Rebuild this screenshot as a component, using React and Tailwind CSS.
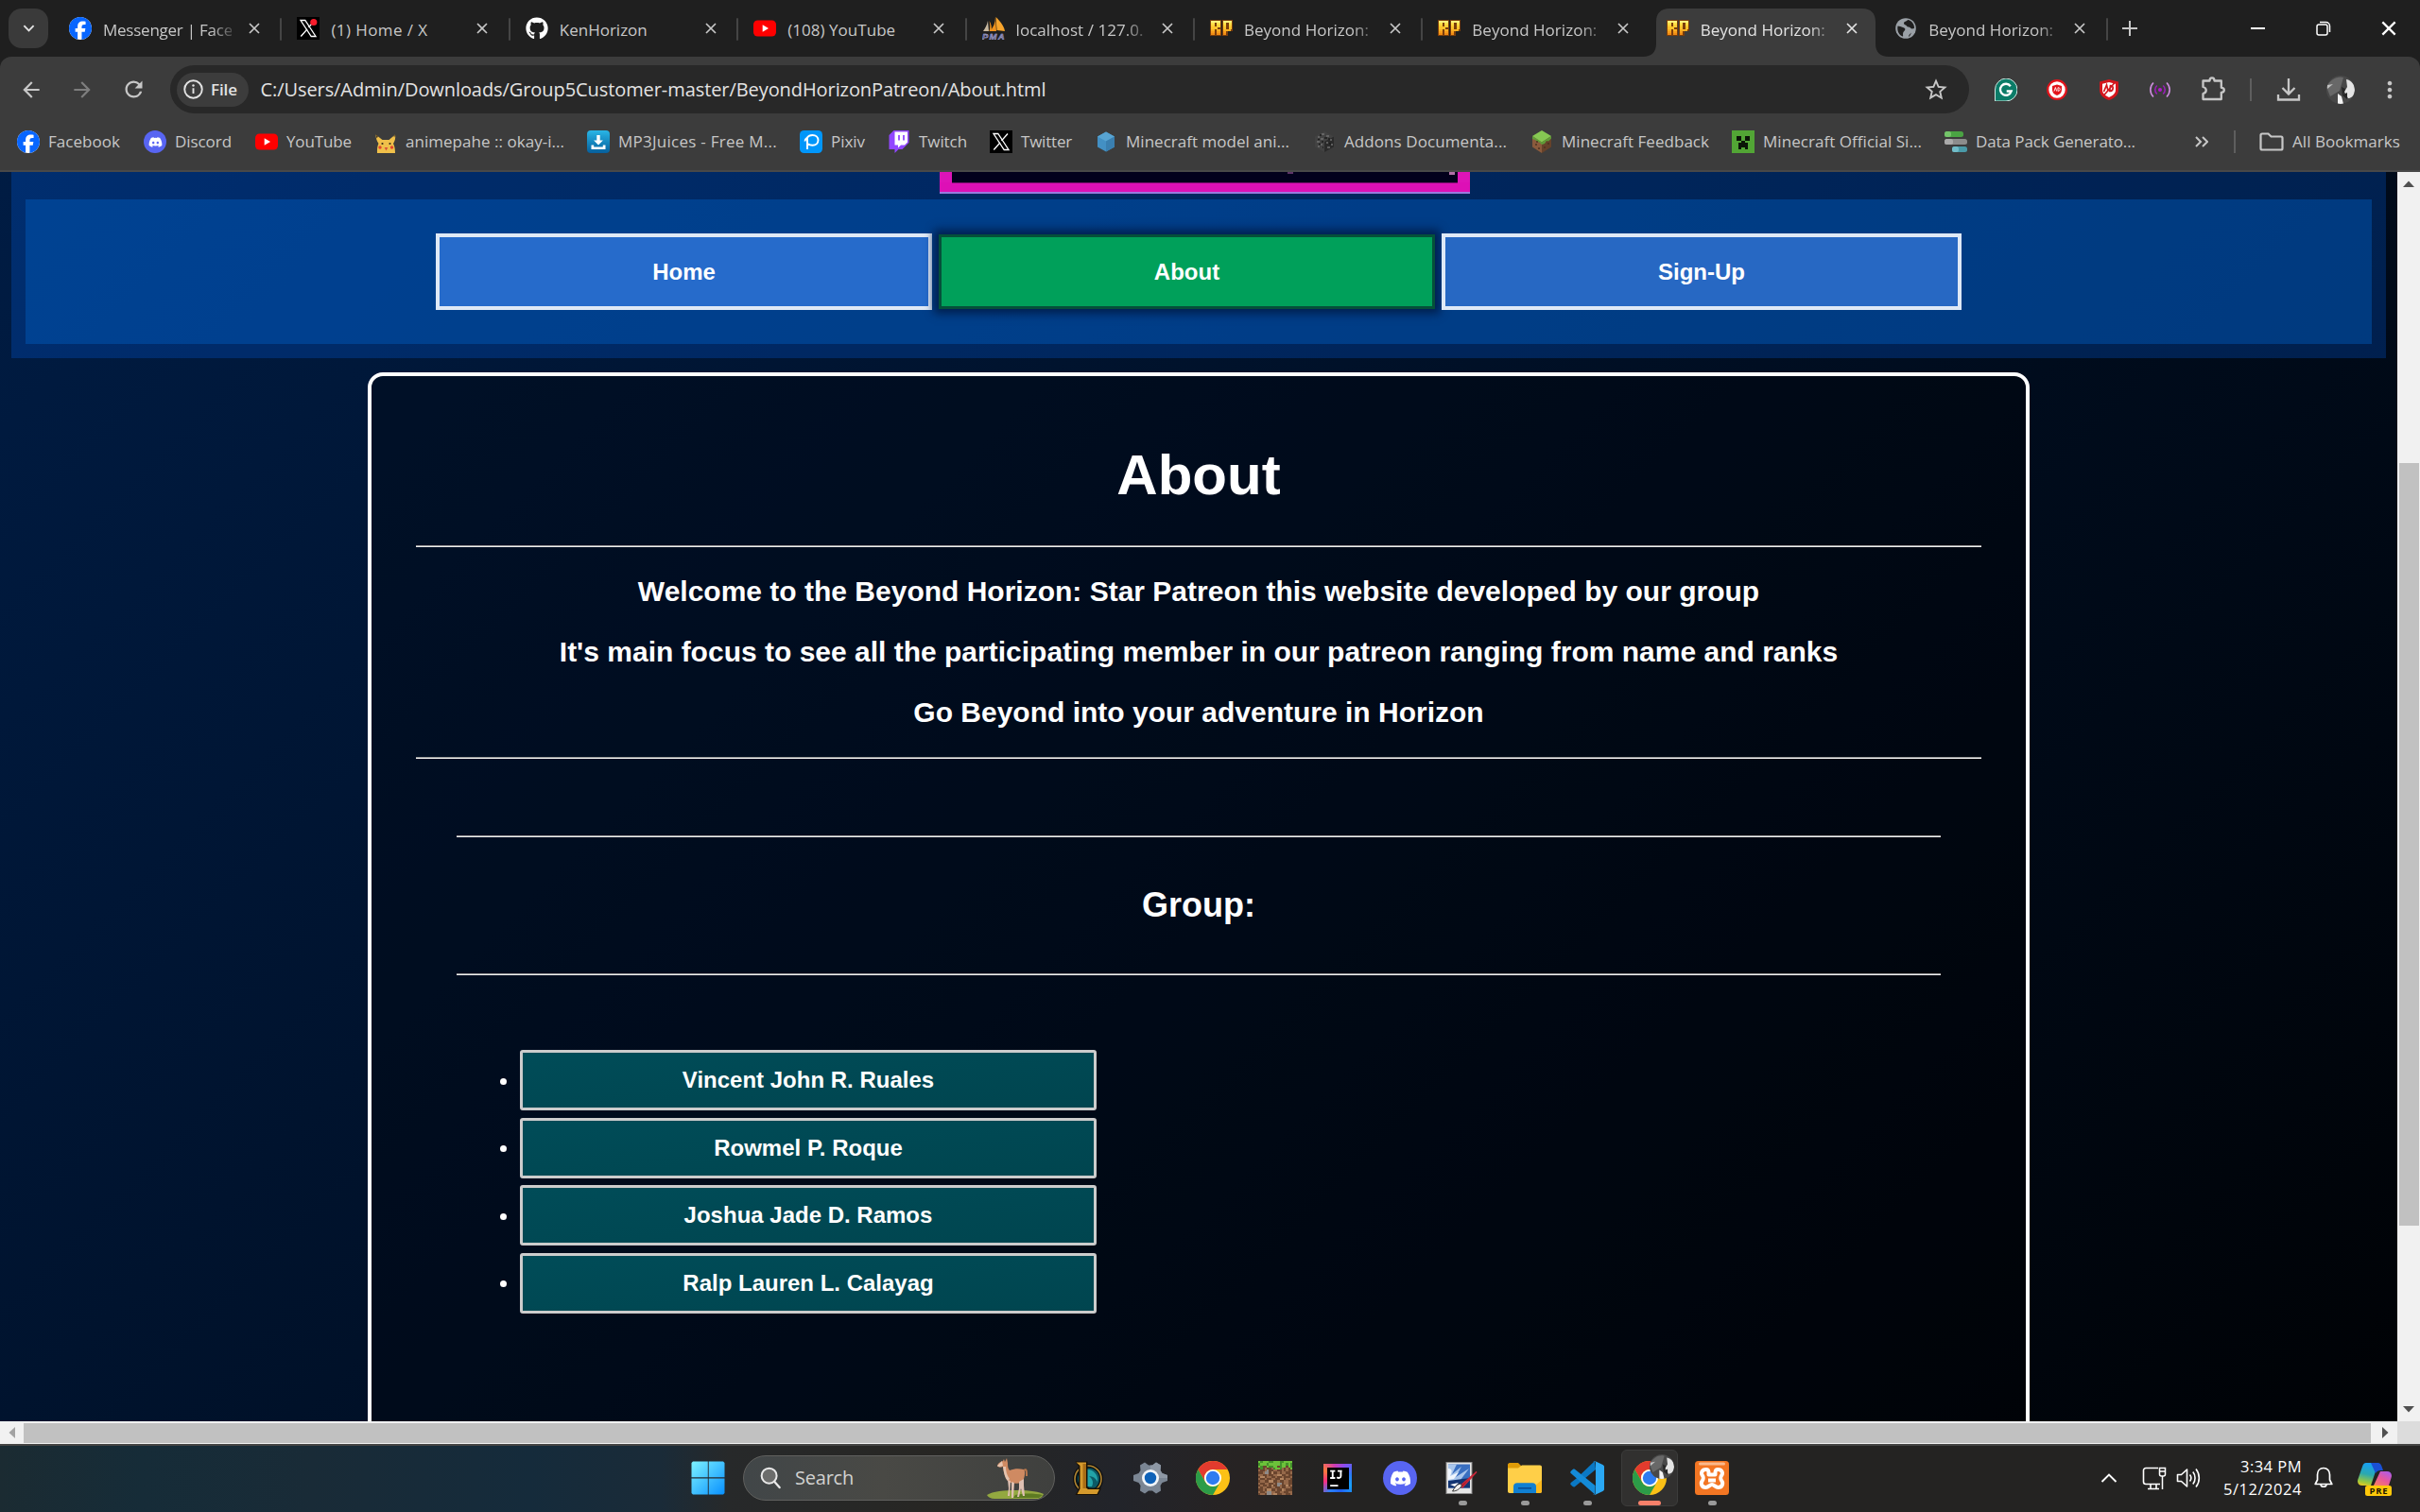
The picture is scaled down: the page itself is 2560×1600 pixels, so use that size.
import React, { useLayoutEffect, useRef, useState } from "react";
import { FaFacebook, FaGithub, FaDiscord } from "react-icons/fa6";
import {
  MdArrowBack,
  MdArrowForward,
  MdRefresh,
  MdStarBorder,
  MdMoreVert,
} from "react-icons/md";

/* Text whose tracking is adjusted so that it fills exactly `width` pixels. */
function Fit({ width, children, className = "" }) {
  const ref = useRef(null);
  const [spacing, setSpacing] = useState(0);
  useLayoutEffect(() => {
    const el = ref.current;
    el.style.letterSpacing = "0px";
    const natural = el.getBoundingClientRect().width;
    setSpacing((width - natural) / children.length);
  }, [width, children]);
  return (
    <span
      ref={ref}
      className={`inline-block shrink-0 whitespace-pre ${className}`}
      style={{ letterSpacing: `${spacing}px` }}
    >
      {children}
    </span>
  );
}

/* ---------- site icons ---------- */

const Facebook = () => (
  <span className="block size-6 rounded-full bg-white">
    <FaFacebook className="size-6 text-[#0866ff]" />
  </span>
);

const XLogo = ({ dot }) => (
  <svg viewBox="0 0 24 24" className="size-6">
    <rect width="24" height="24" fill="#000" />
    <path d="M4 3.500h4.800L20 20.500h-4.800z" fill="none" stroke="#fff" strokeWidth="1.300" />
    <path d="M19 3.500l-6.500 7.400M4.300 20.500l6.700-7.600" stroke="#fff" strokeWidth="1.400" />
    {dot && <circle cx="17.800" cy="5.500" r="3.600" fill="#f91c2b" />}
  </svg>
);

const Github = () => <FaGithub className="size-6 text-white" />;

const YouTube = () => (
  <svg viewBox="0 0 24 24" className="size-6">
    <rect x="0" y="3.500" width="24" height="17" rx="4.500" fill="#f00" />
    <path d="M9.700 8.300v7.400l6.300-3.700z" fill="#fff" />
  </svg>
);

const PhpMyAdmin = () => (
  <svg viewBox="0 0 24 24" className="size-6">
    <path d="M6 4c-1 5-3 8-5 11h6z" fill="#c9b9a0" />
    <path d="M14 0c0 6-2 11-6 15h7z" fill="#f0921c" />
    <path d="M14.500 0c4 4 8.500 9 9.500 15l-8.500-1z" fill="#f8a52c" />
    <path d="M7.500 4c1 4 1 8 0 11h2c1-4 0-8-2-11z" fill="#f0921c" />
    <text x="0" y="23.500" fontSize="9.500" fontWeight="700" fontStyle="italic" textLength="23.500" fontFamily="Liberation Sans, sans-serif" fill="#50508c" stroke="#c4c4e4" strokeWidth="0.400">PMA</text>
  </svg>
);

const RP_FILLS = ["#fff27a", "#ffe24a", "#ffd23a", "#ffc42c", "#fbb024", "#f79c1c", "#f08c14"];

const RPLogo = () => (
  <svg viewBox="0 0 24 24" className="size-6" shapeRendering="crispEdges">
    <rect x="0" y="3" width="11.500" height="17" fill="#7a3d0c" />
    <rect x="12.500" y="3" width="11.500" height="12" fill="#7a3d0c" />
    <rect x="12.500" y="14" width="6" height="6" fill="#7a3d0c" />
    {RP_FILLS.map((fill, y) => (
      <g key={y} fill={fill}>
        <rect x="1" y={4 + y * 2.15} width="3.500" height="2.200" />
        {y !== 3 && <rect x="7" y={4 + y * 2.15} width="3.500" height="2.200" />}
        {(y === 0 || y === 3) && <rect x="4" y={4 + y * 2.15} width="4" height="2.200" />}
        <rect x="13.500" y={4 + y * 2.15} width="3.500" height="2.200" />
        {y < 4 && <rect x="19.500" y={4 + y * 2.15} width="3.500" height="2.200" />}
        {(y === 0 || y === 4) && <rect x="16" y={4 + y * 2.15} width="6" height="2.200" />}
      </g>
    ))}
  </svg>
);

const Globe = () => (
  <svg viewBox="0 0 24 24" className="size-6">
    <circle cx="12" cy="12" r="10.800" fill="#9aa0a6" />
    <path d="M3.500 9.500c2 0 3.500 1 5.500 1.500s3 1.500 2 3-2 2-2 4 .5 2.500-.5 2.500C5 19 2.500 15 3.500 9.500zM14 3c-1 2-4 1.500-4 3.500s2.500 1.500 3 3 3 .5 4 2 3.500 1 4 0c.3-4-3-8-7-8.500zM15 21c0-2 1-2.500 3-4.500-1 2.500-1.500 3.500-3 4.500z" fill="#1f1f1f" />
  </svg>
);

const DiscordRound = ({ big }) => (
  <span className={big ? "flex size-9 items-center justify-center rounded-full bg-[#5865f2]" : "flex size-6 items-center justify-center rounded-full bg-[#5865f2]"}>
    <FaDiscord className={big ? "size-[23px] text-white" : "size-[15px] text-white"} />
  </span>
);

const Pikachu = () => (
  <svg viewBox="0 0 24 24" className="size-6">
    <path d="M1.500 4.500L8.500 10h7L22 4.500c.8 4-.5 7-2 9.500 1 2 2 4 2 10H3c0-5 0-7 1.500-10C2.500 11 1.500 8 1.500 4.500z" fill="#f0c04a" />
    <path d="M1.500 4.500l2.500 2-1.500 2zM22 4.500l-1.600 1.300.8 1.700z" fill="#4a3a20" />
    <circle cx="8.500" cy="14" r="1.100" fill="#3a2b18" />
    <circle cx="16.500" cy="14" r="1.100" fill="#3a2b18" />
    <circle cx="6" cy="18" r="1.700" fill="#e2452c" />
    <circle cx="18.500" cy="18" r="1.700" fill="#e2452c" />
    <path d="M10.700 18h3.600L12.500 21.500z" fill="#d8503a" />
  </svg>
);

const MP3 = () => (
  <span className="flex size-6 items-center justify-center rounded-[4px] bg-linear-to-b from-[#29b6e6] to-[#075f9c]">
    <svg viewBox="0 0 24 24" className="size-6">
      <path d="M10.300 5h3.400v5.500h3.200L12 15.600l-4.900-5.100h3.200z" fill="#fff" />
      <path d="M4.500 15.500h2.700v2h9.600v-2h2.700V20h-15z" fill="#fff" />
    </svg>
  </span>
);

const Pixiv = () => (
  <svg viewBox="0 0 24 24" className="size-6">
    <rect width="24" height="24" rx="4.500" fill="#0096fa" />
    <path d="M8 20V7.500C9 6 11 5 13.500 5c3.500 0 6 2.300 6 5.300 0 3.200-2.500 5.500-6 5.500-2 0-3.500-.5-4.500-1.600M8 7.500C6.500 8.500 5.500 10 5.500 11.500" fill="none" stroke="#fff" strokeWidth="1.900" />
  </svg>
);

const Twitch = () => (
  <svg viewBox="0 0 24 24" className="size-6">
    <path d="M6.500 0L1.500 5v15h6v4l4-4h4l7-7V0z" fill="#9146ff" />
    <path d="M7.500 1.500h13.500v11l-3 3h-4l-3 3v-3h-3.500z" fill="#fff" />
    <path d="M12 5v5.500M17 5v5.500" stroke="#9146ff" strokeWidth="1.800" />
  </svg>
);

const BlueBlock = () => (
  <svg viewBox="0 0 24 24" className="size-6">
    <path d="M12 1.500l9 5v11l-9 5-9-5v-11z" fill="#4390c4" />
    <path d="M12 1.500l9 5-9 5-9-5z" fill="#58a4d2" />
    <path d="M12 11.500l9-5v11l-9 5z" fill="#3a7fb0" />
  </svg>
);

const CoalBlock = () => (
  <svg viewBox="0 0 24 24" className="size-6">
    <path d="M12 1l10 5.500v11L12 23 2 17.500v-11z" fill="#424242" />
    <path d="M12 12l10-5.500v11L12 23z" fill="#2a2a2a" />
    <path d="M5 7h2M9 4h3M14 6h3M8 9h3M4 12h3M8 15h2M5 17h2M14 13h2M18 10h2M15 18h3M19 15h2" stroke="#707070" strokeWidth="1.300" />
    <path d="M7 5h2M12 8h3M5 9.500h2M9 12h2M6 14.500h2M10 18h1M16 9h2M17 14h2" stroke="#1c1c1c" strokeWidth="1.300" />
  </svg>
);

const GrassBlock = () => (
  <svg viewBox="0 0 24 24" className="size-6">
    <path d="M12 11l10-5v11.500L12 24z" fill="#66422a" />
    <path d="M12 11L2 6v11.500L12 24z" fill="#8a5a3c" />
    <path d="M12 0l10 6-10 6.500L2 6z" fill="#86c853" />
    <path d="M2 6l10 6.500L22 6v2.500l-3 3-2-.5-2 3-3 1-2.500-2.500L7 12l-2-2-3-1z" fill="#5f9c38" />
    <path d="M5 15h2M8 19h2M6 12h2M14 18h2M18 14h2" stroke="#4e3220" strokeWidth="1.400" />
  </svg>
);

const Creeper = () => (
  <svg viewBox="0 0 24 24" className="size-6" shapeRendering="crispEdges">
    <rect width="24" height="24" fill="#52a535" />
    <path d="M5 6h5v5H5zM14 6h5v5h-5zM10 11h4v2h3v7h-3v-2h-4v2H7v-7h3z" fill="#0b1407" />
  </svg>
);

const DataPack = () => (
  <svg viewBox="0 0 24 24" className="size-6">
    <rect x="0" y="1" width="20" height="6" rx="2.500" fill="#4aa343" />
    <rect x="0" y="1" width="7" height="6" rx="2.500" fill="#74c46a" />
    <rect x="0" y="9" width="24" height="6" rx="2.500" fill="#8c8c8c" />
    <rect x="0" y="9" width="9" height="6" rx="2.500" fill="#aaa" />
    <rect x="8" y="17" width="16" height="6" rx="2.500" fill="#4a9aa8" />
    <rect x="8" y="17" width="7" height="6" rx="2.500" fill="#72bcc8" />
  </svg>
);

/* ---------- browser chrome ---------- */

const TABS = [
  { icon: <Facebook />, title: "Messenger | Face", width: 137, fade: true, sep: true },
  { icon: <XLogo dot />, title: "(1) Home / X", width: 102, sep: true },
  { icon: <Github />, title: "KenHorizon", width: 93, sep: true },
  { icon: <YouTube />, title: "(108) YouTube", width: 114, sep: true },
  { icon: <PhpMyAdmin />, title: "localhost / 127.0.", width: 135, fade: true, sep: true },
  { icon: <RPLogo />, title: "Beyond Horizon:", width: 132, fade: true, sep: true },
  { icon: <RPLogo />, title: "Beyond Horizon:", width: 132, fade: true },
  { icon: <RPLogo />, title: "Beyond Horizon:", width: 132, fade: true, active: true },
  { icon: <Globe />, title: "Beyond Horizon:", width: 132, fade: true, sep: true },
];

const Cross = ({ className }) => (
  <svg viewBox="0 0 12 12" className={className}>
    <path d="M1 1l10 10M11 1L1 11" stroke="currentColor" strokeWidth="1.700" fill="none" />
  </svg>
);

function Tab({ icon, title, width, fade, sep, active }) {
  return (
    <div className="relative flex h-[60px] w-[241.400px] shrink-0 items-start pt-[9px]">
      {active && (
        <svg viewBox="0 0 262 51" className="absolute top-[9px] left-[-9px] h-[51px] w-[262px]">
          <path d="M0 51c9 0 14-5 14-14V14C14 5 19 0 28 0h204c9 0 14 5 14 14v23c0 9 5 14 14 14z" fill="#3c3c3c" />
        </svg>
      )}
      <div className="relative flex h-[42px] w-full items-center pl-[16px]">
        <span className="size-6 shrink-0">{icon}</span>
        <div
          className={
            "mt-[4px] ml-3 w-[136px] shrink-0 overflow-hidden text-[17px] leading-6 " +
            (active ? "text-[#e3e3e3] " : "text-[#c7c7c7] ") +
            (fade ? "[mask-image:linear-gradient(to_right,#000_84%,transparent_106%)]" : "")
          }
        >
          <Fit width={width}>{title}</Fit>
        </div>
        <Cross className={"ml-[18px] size-3 " + (active ? "text-[#e3e3e3]" : "text-[#c7c7c7]")} />
        {sep && <span className="mt-[2px] ml-auto h-6 w-[2px] rounded bg-[#454545]" />}
      </div>
    </div>
  );
}

function TabStrip() {
  return (
    <div className="flex h-[60px] w-full bg-[#1f1f1f]">
      <div className="mt-[9px] ml-[9px] flex size-[42px] shrink-0 items-center justify-center rounded-[14px] bg-[#3a3a3a]">
        <svg viewBox="0 0 14 8" className="h-2 w-[13px]">
          <path d="M1.500 1l5.500 5.500L12.500 1" fill="none" stroke="#e3e3e3" strokeWidth="2" />
        </svg>
      </div>
      <div className="ml-[6px] flex">
        {TABS.map((t, i) => (
          <Tab key={i} {...t} />
        ))}
      </div>
      <svg viewBox="0 0 16 16" className="mt-[22px] ml-[15px] size-4 shrink-0">
        <path d="M8 0v16M0 8h16" stroke="#c7c7c7" strokeWidth="2" />
      </svg>
      <div className="ml-auto flex items-center pr-[25px] text-white">
        <span className="mb-px h-[2px] w-[15px] bg-white" />
        <svg viewBox="0 0 16 16" className="ml-[54px] size-4">
          <rect x="1" y="4" width="11" height="11" rx="2" fill="none" stroke="#fff" strokeWidth="1.500" />
          <path d="M4 1.500h6.500a4 4 0 0 1 4 4V12" fill="none" stroke="#fff" strokeWidth="1.500" />
        </svg>
        <Cross className="ml-[53px] size-4" />
      </div>
    </div>
  );
}

const AvatarArt = ({ className }) => (
  <svg viewBox="0 0 30 30" className={className}>
    <defs>
      <clipPath id="avatar-clip"><circle cx="15" cy="15" r="15" /></clipPath>
    </defs>
    <g clipPath="url(#avatar-clip)">
      <rect width="30" height="30" fill="#484848" />
      <path d="M0 12C4 4 12 0 18 2l-4 14L4 22z" fill="#686868" />
      <path d="M1 10l6-1-6 5z" fill="#c0c0c0" />
      <path d="M21 4c6 1 9 6 9 12-1 6-4 8-7 8l-4-7 3-5z" fill="#e4e4e4" />
      <path d="M12 19l4 3 2 8h-6z" fill="#f4f4f4" />
      <path d="M16 12l4 2-2 6 4-2v7l-5-4z" fill="#262626" />
    </g>
  </svg>
);

function Toolbar() {
  return (
    <div className="flex h-[69px] w-full items-center rounded-t-xl bg-[#3c3c3c] text-[#c7c7c7]">
      <MdArrowBack className="ml-[20px] size-[26px] shrink-0" />
      <MdArrowForward className="ml-[28px] size-[26px] shrink-0 text-[#7e7e7e]" />
      <MdRefresh className="ml-[28px] size-[27px] shrink-0" />
      <div className="ml-[25px] flex h-[51px] w-[1903px] shrink-0 items-center rounded-full bg-[#282828]">
        <div className="ml-[7px] flex h-9 w-[76px] items-center rounded-full bg-[#3c3c3c] pl-[7px]">
          <svg viewBox="0 0 22 22" className="size-[21px]">
            <circle cx="11" cy="11" r="9.700" fill="none" stroke="#e3e3e3" strokeWidth="2" />
            <path d="M11 9.700v6" stroke="#e3e3e3" strokeWidth="2" />
            <circle cx="11" cy="6.800" r="1.300" fill="#e3e3e3" />
          </svg>
          <Fit width={28} className="ml-[8px] text-[17px] leading-6 font-semibold text-[#e3e3e3]">File</Fit>
        </div>
        <Fit width={831} className="ml-[12.500px] text-[20px] leading-7 text-[#e3e3e3]">
          C:/Users/Admin/Downloads/Group5Customer-master/BeyondHorizonPatreon/About.html
        </Fit>
        <MdStarBorder className="mr-[21px] ml-auto size-[28px]" />
      </div>
      {/* extensions */}
      <svg viewBox="0 0 24 24" className="ml-[27px] size-6 shrink-0">
        <path d="M12 0a12 12 0 0 1 0 24H.5V12A12 12 0 0 1 12 0z" fill="#0b7c68" stroke="#cfe8e2" strokeWidth="1" />
        <path d="M16.800 8.200a6 6 0 1 0 .9 5.300h-5" fill="none" stroke="#fff" strokeWidth="2.300" />
      </svg>
      <svg viewBox="0 0 22 22" className="ml-[31px] size-[22px] shrink-0">
        <circle cx="11" cy="11" r="9.800" fill="#fff" stroke="#e3141b" strokeWidth="2.200" />
        <path d="M11 5.500l5 1.500v4c0 3-2 5-5 6-3-1-5-3-5-6V7z" fill="#e3141b" />
        <path d="M8 12.500l1.400-4 1.300 4M12 8.700v3.600c3 0 3-3.600 0-3.600z" fill="none" stroke="#fff" strokeWidth="0.900" />
      </svg>
      <svg viewBox="0 0 22 22" className="ml-[33px] size-[22px] shrink-0">
        <path d="M11 0l10 2.500V11c0 5.500-4 9-10 11C5 20 1 16.500 1 11V2.500z" fill="#d3161c" />
        <path d="M11 3l7 1.700V11c0 4-3 6.300-7 8-4-1.700-7-4-7-8V4.700z" fill="#fff" />
        <path d="M5.500 13l3-7 1.500 6M12.500 6.500l-.8 6c4 0 5-6 .8-6zM5.500 17L17 3.500" fill="none" stroke="#d3161c" strokeWidth="1.700" />
      </svg>
      <svg viewBox="0 0 22 22" className="ml-[32px] size-[22px] shrink-0">
        <circle cx="11" cy="11" r="2" fill="#b518d0" />
        <path d="M7.800 6.500a6 6 0 0 0 0 9M14.200 6.500a6 6 0 0 1 0 9" fill="none" stroke="#9a1fb8" strokeWidth="1.600" />
        <path d="M4 3.500a10.500 10.500 0 0 0 0 15M18 3.500a10.500 10.500 0 0 1 0 15" fill="none" stroke="#cf8fe0" strokeWidth="1.600" />
      </svg>
      <svg viewBox="0 0 27 27" className="mb-[2px] ml-[32px] size-[27px] shrink-0">
        <path d="M2.500 5.500h7c0-4.300 5-4.300 5 0h7.300v7.300c4 0 4 5 0 5v7.200H2.500v-6c4.300-1 4.300-6 0-7z" fill="none" stroke="#c7c7c7" strokeWidth="2.300" strokeLinejoin="round" />
      </svg>
      <span className="ml-[25px] h-6 w-[2px] shrink-0 bg-[#5e5e5e]" />
      <svg viewBox="0 0 26 26" className="ml-[26px] size-[26px] shrink-0">
        <path d="M13 1v16M6.500 11l6.500 6.500L19.500 11M2 18v5.500h22V18" fill="none" stroke="#c7c7c7" strokeWidth="2.300" />
      </svg>
      <AvatarArt className="ml-[27px] size-[30px] shrink-0" />
      <MdMoreVert className="ml-[23px] size-[28px] shrink-0" />
    </div>
  );
}

const BOOKMARKS = [
  { icon: <Facebook />, label: "Facebook", text: 76, cell: "w-[134px]" },
  { icon: <DiscordRound />, label: "Discord", text: 60, cell: "w-[118px]" },
  { icon: <YouTube />, label: "YouTube", text: 69, cell: "w-[126px]" },
  { icon: <Pikachu />, label: "animepahe :: okay-i...", text: 168, cell: "w-[225px]" },
  { icon: <MP3 />, label: "MP3Juices - Free M...", text: 168, cell: "w-[225px]" },
  { icon: <Pixiv />, label: "Pixiv", text: 36, cell: "w-[93px]" },
  { icon: <Twitch />, label: "Twitch", text: 51, cell: "w-[108px]" },
  { icon: <XLogo />, label: "Twitter", text: 54, cell: "w-[111px]" },
  { icon: <BlueBlock />, label: "Minecraft model ani...", text: 173, cell: "w-[231px]" },
  { icon: <CoalBlock />, label: "Addons Documenta...", text: 172, cell: "w-[230px]" },
  { icon: <GrassBlock />, label: "Minecraft Feedback", text: 156, cell: "w-[213px]" },
  { icon: <Creeper />, label: "Minecraft Official Si...", text: 168, cell: "w-[225px]" },
  { icon: <DataPack />, label: "Data Pack Generato...", text: 169, cell: "w-[265px]" },
];

function Bookmarks() {
  return (
    <div className="flex h-[53px] w-full items-center border-b-2 border-[#484848] bg-[#3c3c3c] pb-[9px] pl-[18px] text-[17px] leading-6 text-[#c7c7c7]">
      {BOOKMARKS.map((b) => (
        <div key={b.label} className={`flex shrink-0 items-center ${b.cell}`}>
          <span className="size-6 shrink-0">{b.icon}</span>
          <Fit width={b.text} className="ml-[9px]">{b.label}</Fit>
        </div>
      ))}
      <svg viewBox="0 0 14 12" className="h-3 w-[14px] shrink-0">
        <path d="M1 1l5 5-5 5M8 1l5 5-5 5" fill="none" stroke="#c7c7c7" strokeWidth="2" />
      </svg>
      <span className="ml-[27px] h-6 w-[2px] shrink-0 bg-[#5e5e5e]" />
      <svg viewBox="0 0 26 20" className="ml-[25px] h-5 w-[26px] shrink-0">
        <path d="M1.500 3c0-1 .5-1.500 1.500-1.500h6.500l3 3H23c1 0 1.500.5 1.500 1.500v11c0 1-.5 1.500-1.500 1.500H3c-1 0-1.500-.5-1.500-1.500z" fill="none" stroke="#c7c7c7" strokeWidth="2.200" />
      </svg>
      <Fit width={114} className="ml-[9px]">All Bookmarks</Fit>
    </div>
  );
}

/* ---------- web page ---------- */

const Rule = ({ className = "" }) => (
  <div className={`h-[2px] border-t border-[#9c9c9c] bg-[#eeeeee] ${className}`} />
);

const MEMBERS = ["Vincent John R. Ruales", "Rowmel P. Roque", "Joshua Jade D. Ramos", "Ralp Lauren L. Calayag"];

function WebPage() {
  return (
    <div className="h-[1322px] w-[2536px] shrink-0 overflow-hidden bg-[linear-gradient(135deg,#001f4b,#000000)] [background-position:0_-465px] [background-size:2536px_2087px] font-['Liberation_Sans',Arial,sans-serif] font-bold text-white">
      <header className="ml-[12px] h-[197px] w-[2512px] bg-[#0064f4]/25">
        <div className="ml-[982px] flex h-[23px] w-[561px] flex-col">
          <div className="flex h-[11px] justify-end border-x-[13px] border-[#dd14b8] bg-[#02001c]">
            <span className="mr-[165px] h-[2px] w-[6px] bg-[#5c3468]" />
            <span className="mr-[3px] h-[3px] w-[6px] bg-[#b070a8]" />
          </div>
          <div className="flex h-[10px] justify-center bg-[#dd10b6]">
            <span className="h-px w-[535px] bg-[#7d0f70]" />
          </div>
          <div className="h-[2px] bg-[#9a7ade]" />
        </div>
        <nav className="mt-[6px] ml-[15px] flex h-[153px] w-[2482px] items-start bg-[#0062c8]/40 pt-[36px] pl-[434px] text-[24px]">
          <a className="flex h-[81px] w-[525px] items-center justify-center border-4 border-[#dfe9f6] bg-[#266bcb]">Home</a>
          <a className="mt-px ml-[7px] flex h-[79px] w-[525px] items-center justify-center border-[3px] border-[#05503a] bg-[#00a05a] shadow-[0_0_9px_5px_#00204f]">About</a>
          <a className="relative ml-[7px] flex h-[81px] w-[550px] items-center justify-center border-4 border-[#dfe9f6] bg-[#2768c3]">Sign-Up</a>
        </nav>
      </header>

      <main className="mt-[15px] ml-[389px] h-[1300px] w-[1758px] rounded-[16px] border-4 border-white bg-black/30 px-[47px] pt-[75px] text-center">
        <h1 className="h-[60px] text-[60px] leading-[60px]">About</h1>
        <Rule className="mt-[44px]" />
        <div className="mt-[15px] text-[30px] leading-[64px]">
          <p>Welcome to the Beyond Horizon: Star Patreon this website developed by our group</p>
          <p>It's main focus to see all the participating member in our patreon ranging from name and ranks</p>
          <p>Go Beyond into your adventure in Horizon</p>
        </div>
        <Rule className="mt-[15px]" />
        <section className="mt-[81px] px-[43px]">
          <Rule />
          <h2 className="mt-[52px] h-[40px] text-[36px] leading-[40px]">Group:</h2>
          <Rule className="mt-[52px]" />
          <ul className="mt-[79px] flex flex-col gap-[7.670px] pl-[46px] text-[24px]">
            {MEMBERS.map((m) => (
              <li key={m} className="flex items-center gap-[14px]">
                <span className="mt-[2px] size-[7px] rounded-full bg-white" />
                <span className="flex h-16 w-[610px] items-center justify-center rounded-[3px] border-[3px] border-[#cccccc] bg-linear-to-br from-[#004c58] to-[#00454f]">
                  {m}
                </span>
              </li>
            ))}
          </ul>
        </section>
      </main>
    </div>
  );
}

const Arrow = ({ d, fill }) => (
  <svg viewBox="0 0 12 12" className="size-3">
    <path d={d} fill={fill} />
  </svg>
);

function VerticalScroll() {
  return (
    <div className="flex h-[1322px] w-6 flex-col items-center bg-[#f1f1f1]">
      <div className="flex h-[26px] items-center"><Arrow d="M0 9l6-6.500L12 9z" fill="#505050" /></div>
      <div className="mt-[282px] h-[807px] w-[21px] bg-[#c1c1c1]" />
      <div className="mt-auto flex h-[27px] items-center"><Arrow d="M0 3l6 6.500L12 3z" fill="#505050" /></div>
    </div>
  );
}

function HorizontalScroll() {
  return (
    <div className="flex h-6 w-full bg-[#f1f1f1]">
      <div className="flex w-[25px] items-center justify-center"><Arrow d="M9 0L2.500 6 9 12z" fill="#a3a3a3" /></div>
      <div className="mt-[2px] h-[21px] w-[2483px] bg-[#c1c1c1]" />
      <div className="flex w-[28px] items-center justify-center pl-[2px]"><Arrow d="M3 0l6.500 6L3 12z" fill="#505050" /></div>
      <div className="h-6 w-6 bg-[#dcdcdc]" />
    </div>
  );
}

/* ---------- taskbar ---------- */

const Windows = () => (
  <svg viewBox="0 0 36 36" className="size-9">
    <defs>
      <linearGradient id="win" x1="0" y1="0" x2="1" y2="1">
        <stop offset="0" stopColor="#7df3ff" />
        <stop offset="1" stopColor="#0890ff" />
      </linearGradient>
    </defs>
    <path d="M2 .5h15.800v16.800H.5V2zM18.700.5H34l1.500 1.500v15.300H18.700zM.5 18.400h17.300v17.100H2L.5 34zM18.700 18.400h16.800V34L34 35.500H18.700z" fill="url(#win)" />
  </svg>
);

const Guanaco = () => (
  <svg viewBox="0 0 60 44" className="h-[44px] w-[60px]">
    <path d="M0 40c6-4 18-5 32-5 14 0 24 2 28 4-1 3-4 5-8 5H8c-4 0-7-2-8-4z" fill="#93a840" />
    <path d="M30 40c8-2 20-2 29 0l-4 3H28z" fill="#5d7a22" />
    <path d="M18 2l1 3 2-4 1 5c0 3 0 6 2 8 5-2 10-2 15-1 2 2 1 7 0 10l-2 4c-4 1-8 1-12 0-5-2-7-9-8-17-2 1-5 1-6-1 1-3 3-4 6-5z" fill="#cf8a62" />
    <path d="M16 4l-5 5c1 2 4 1 6 0zM17 10c1 7 2 12 5 15l2-2c-3-4-4-8-4-13z" fill="#e4c4b0" />
    <path d="M22 24l3 1-1 16h-2l1-8zM26 26l3 1-1 16h-2zM34 26l5-3v7l1 11h-2l-2-8-2 9h-2l2-9z" fill="#dfc0b2" />
    <path d="M39 14c3-2 3 0 3 6" fill="none" stroke="#b8764c" strokeWidth="2" />
  </svg>
);

const League = () => (
  <svg viewBox="0 0 36 36" className="size-9">
    <circle cx="18" cy="19" r="16" fill="#0a0c10" />
    <circle cx="18" cy="19" r="14" fill="#071418" stroke="#b08430" strokeWidth="1.600" />
    <circle cx="18.500" cy="19" r="11.500" fill="#0c5a66" />
    <path d="M17 9c7 0 12 6 11 13-2-4-5-6-9-6 4 3 5 7 3 11h-5z" fill="#22a3a8" />
    <path d="M4.500.5h13v26.500l2 1.500h12.500l-3.500 7.500H4.500l3.500-6V6z" fill="#1a1206" />
    <path d="M5.500 1.500h10.500v27L18 30h12l-2.500 5H6.500l3-5.500V5z" fill="#d59a2c" />
    <path d="M12.500 3H16v26h-3.500z" fill="#a86d16" />
  </svg>
);

const Gear = () => (
  <svg viewBox="0 0 36 36" className="size-9">
    <path d="M12 1.500l4 3h4l4-3 5 3-.5 5.500 2 3 5.500 2v6l-5.500 2-2 3 .5 5.500-5 3-4-3h-4l-4 3-5-3 .500-5.500-2-3L0 21v-6l5.500-2 2-3L7 4.500z" fill="#7b8694" />
    <path d="M18 4.500h2l4-3 5 3-.5 5.500 2 3 5.500 2v3H18z" fill="#8e98a5" />
    <circle cx="18" cy="18" r="9" fill="#f2f5f8" />
    <circle cx="18" cy="18" r="6.200" fill="#0f62b8" />
  </svg>
);

const Chrome = () => (
  <svg viewBox="0 0 36 36" className="size-9">
    <circle cx="18" cy="18" r="18" fill="#fbc116" />
    <path d="M2.410 9A18 18 0 0 1 33.590 9H18a9 9 0 0 0-7.800 13.500z" fill="#e33b2e" />
    <path d="M2.410 9a18 18 0 0 0 15.590 27l7.800-13.500a9 9 0 0 1-15.600 0z" fill="#2c9c48" />
    <circle cx="18" cy="18" r="9" fill="#fff" />
    <circle cx="18" cy="18" r="7.200" fill="#2e7cf0" />
  </svg>
);

const DIRT = [
  "gGgggGGgggGGgggg",
  "GgggGgggggGggGgG",
  "gGddgGGggdGggdgG",
  "dGdbddbGggGbdbdg",
  "bddbsddbbddbdbdd",
  "ddbssdcddbdbbddb",
  "bbddbddbbccddbdd",
  "dccdbbddbddbdddb",
  "bddbddbbddccdbbd",
  "dbbddccddbddbbdd",
  "bddbbddbdssdbbdd",
  "dbddbdcddsbddcdb",
  "bdbbddbbddbddbbd",
  "ddbdccddbddcbddd",
  "bddbssbbddbbddbb",
  "dbbdssbccddbbddb",
];
const DIRT_COLORS = { g: "#6cc23a", G: "#42902a", d: "#6a452e", b: "#96694a", c: "#b38560", s: "#8e8a88" };

const DirtBlock = () => (
  <svg viewBox="0 0 16 16" className="size-9" shapeRendering="crispEdges">
    {DIRT.map((row, y) =>
      row.split("").map((c, x) => (
        <rect key={`${x}-${y}`} x={x} y={y} width="1" height="1" fill={DIRT_COLORS[c]} />
      ))
    )}
  </svg>
);

const IntelliJ = () => (
  <span className="flex size-[30px] items-center justify-center bg-[conic-gradient(from_300deg,#ff7a3c,#d03cb0,#8a4cf0,#2a7cf8,#18a0f8,#2060f0,#2a80f8,#ff2c80,#ff7a3c)]">
    <svg viewBox="0 0 22 22" className="size-[23px] bg-black">
      <path d="M3 3.500h5M5.500 3.500v7M3 10.500h5M10.500 3.500h4.500M13.800 3.500v5c0 2-2.500 2.500-4 1.300" fill="none" stroke="#fff" strokeWidth="1.800" />
      <path d="M3 18.300h8" stroke="#fff" strokeWidth="1.700" />
    </svg>
  </span>
);

const PaintTool = () => (
  <svg viewBox="0 0 36 36" className="size-9">
    <rect x="1" y="1.500" width="27" height="33" fill="#e6e6e6" stroke="#8c8c8c" />
    <rect x="3" y="3.500" width="23" height="25" fill="#3a6fc0" />
    <path d="M3 3.500h9L7 14l10-8-6 11 14-9-9 12-13 2z" fill="#a9c6ec" />
    <path d="M3 8c5 0 4 4 2 8l9-4-5 7-6 1z" fill="#f0f6fd" />
    <path d="M3 21l23-3v10.500H3z" fill="#123472" />
    <path d="M5 25l9-2-4 4z" fill="#fff" />
    <path d="M33 11.500l-17 14.500 2 2z" fill="#a81824" stroke="#c8283a" strokeWidth="1.400" />
    <path d="M15.500 24l2 2c-2 3-5 6-10 6 2-3 4-7 8-8z" fill="#f0f0f0" stroke="#333" strokeWidth="1" />
  </svg>
);

const Explorer = () => (
  <svg viewBox="0 0 36 36" className="size-9">
    <path d="M0 4c0-1 .8-2 2-2h9l4 4-3 5H0z" fill="#e09c08" />
    <path d="M0 7.500h11l4-3h19c1.200 0 2 .8 2 2V32c0 1.200-.8 2-2 2H2c-1.200 0-2-.8-2-2z" fill="#ffcf48" />
    <path d="M36 20v12c0 1.200-.8 2-2 2H20z" fill="#fbb81c" />
    <path d="M6 34V27c0-2.500 1.500-3.800 4-3.800h16c2.500 0 4 1.300 4 3.800v7z" fill="#1180d2" />
    <path d="M11 28.800h14" stroke="#0a4c94" strokeWidth="1.600" />
  </svg>
);

const VSCode = () => (
  <svg viewBox="0 0 36 36" className="size-9">
    <path d="M26 0L7.500 17.800 1 22.800c-1 .8-1 2 0 2.800l1.700 1.500c.7.600 1.500.6 2.200.1L27 9z" fill="#0a78c4" />
    <path d="M1 10.400c-1 .8-1 2 0 2.800l25.500 22.500V26L4.900 8.800c-.7-.5-1.500-.5-2.200.1z" fill="#148bd8" />
    <path d="M26 0l8.500 4c1 .5 1.500 1.200 1.500 2.200v23.600c0 1-.5 1.700-1.500 2.200l-8.500 4c-.8.200-1.500 0-2-.6 1.500.8 3 .2 3-1.400V2c0-1.600-1.500-2.200-3-1.400.5-.6 1.200-.8 2-.6z" fill="#2aa8f4" />
  </svg>
);

const Xampp = () => (
  <svg viewBox="0 0 36 36" className="size-9">
    <rect width="36" height="36" rx="3.500" fill="#f37623" />
    <rect x="4" y="1.500" width="28" height="3" rx="1.500" fill="#fab98c" />
    <path d="M12 9c-5 0-6 4-4 6.500 1 1.300 1 3.700 0 5C5.500 23.500 7 28 11.500 28c3 0 4-3 6.500-3s3.500 3 6.500 3c4.500 0 6-4.500 3.500-7.500-1-1.300-1-3.700 0-5C30 13 29 9 24 9c-3 0-2.500 4-2.500 5.500h-7C14.500 13 15 9 12 9zM14 20.500h8" fill="none" stroke="#fff" strokeWidth="4" strokeLinejoin="round" />
  </svg>
);

const PINNED = [
  { name: "league", icon: <League /> },
  { name: "settings", icon: <Gear /> },
  { name: "chrome", icon: <Chrome /> },
  { name: "minecraft", icon: <DirtBlock /> },
  { name: "intellij", icon: <IntelliJ /> },
  { name: "discord", icon: <DiscordRound big /> },
  { name: "paint", icon: <PaintTool />, open: true },
  { name: "explorer", icon: <Explorer />, open: true },
  { name: "vscode", icon: <VSCode />, open: true },
  { name: "chrome-open", icon: <Chrome />, active: true },
  { name: "xampp", icon: <Xampp />, open: true },
];

function TaskIcon({ icon, open, active }) {
  return (
    <div
      className={
        "relative mr-[6px] flex size-[60px] shrink-0 items-center justify-center rounded-[6px] " +
        (active ? "border border-[#3c3c3b] bg-[#31302f]" : "")
      }
    >
      {icon}
      {active && <AvatarArt className="absolute top-[4px] right-[3px] size-[26px]" />}
      {active && <span className="absolute bottom-0 left-[17px] h-[5px] w-6 rounded-full bg-[#f7806a]" />}
      {open && <span className="absolute bottom-[1px] left-[26px] h-[5px] w-[9px] rounded-full bg-[#9a9a9a]" />}
    </div>
  );
}

const Copilot = () => (
  <svg viewBox="0 0 36 36" className="size-9">
    <defs>
      <linearGradient id="cop-a" x1="0.300" y1="0" x2="0.100" y2="1">
        <stop offset="0" stopColor="#18a0f0" />
        <stop offset="0.450" stopColor="#2aa8b0" />
        <stop offset="0.800" stopColor="#98c840" />
        <stop offset="1" stopColor="#f4c81c" />
      </linearGradient>
      <linearGradient id="cop-b" x1="1" y1="0" x2="0.300" y2="1">
        <stop offset="0" stopColor="#a45cf4" />
        <stop offset="0.500" stopColor="#e8589c" />
        <stop offset="1" stopColor="#fc8a54" />
      </linearGradient>
    </defs>
    <path d="M9 1h13l-8 24H5c-4 0-6-3-4.500-7L5 5c.8-2.500 2-4 4-4z" fill="url(#cop-a)" />
    <path d="M14 1h7c3 0 4 2 4.800 4.500L27 9h-3c-2 0-4 1-5 3z" fill="#1a50d4" />
    <path d="M24 10h7c4 0 6 3 4.500 7L32 28H13l3-1z" fill="url(#cop-b)" />
    <rect x="8" y="25" width="28" height="11" rx="2.500" fill="#ffc80a" />
    <text x="22" y="34" fontSize="9.500" fontWeight="700" textAnchor="middle" textLength="19" fontFamily="Open Sans, sans-serif" fill="#1c1600">PRE</text>
  </svg>
);

function Taskbar() {
  return (
    <div className="flex h-[72px] w-full items-start border-t-2 border-[#444443] bg-[linear-gradient(90deg,#1b2b32_0px,#162c38_150px,#192b37_330px,#152b3b_560px,#1a2b38_700px,#27292a_770px,#272623_1000px,#22242a_1180px,#272323_1310px,#242322_1400px,#242322_2560px)] pt-[4px]">
      <div className="ml-[731px] flex size-[36px] self-start pt-[12px]"><Windows /></div>
      <div className="mt-[6px] mr-[5px] ml-[19px] flex h-12 w-[330px] shrink-0 items-center rounded-full border border-[#60605e] bg-[linear-gradient(90deg,#414648,#494945_45%,#3f403e)] pr-[11px] pl-[17px]">
        <svg viewBox="0 0 24 26" className="h-[24px] w-[22px]">
          <circle cx="10.500" cy="10.500" r="8.700" fill="#6c6d6c" stroke="#e9e9e9" strokeWidth="2.200" />
          <path d="M16.500 17l6 7" stroke="#e9e9e9" strokeWidth="2.500" strokeLinecap="round" />
        </svg>
        <Fit width={62} className="ml-[15px] text-[20px] leading-7 text-[#d2d2d0]">Search</Fit>
        <div className="ml-auto"><Guanaco /></div>
      </div>
      {PINNED.map((p) => (
        <TaskIcon key={p.name} {...p} />
      ))}
      <div className="ml-auto flex h-[60px] items-center pr-[30px] text-white">
        <svg viewBox="0 0 18 10" className="h-[10px] w-[18px]">
          <path d="M1.500 9L9 1.500 16.500 9" fill="none" stroke="#fff" strokeWidth="1.900" />
        </svg>
        <svg viewBox="0 0 26 26" className="ml-[26px] size-[26px]">
          <path d="M17 2.500H4a2.500 2.500 0 0 0-2.500 2.500v12A2.500 2.500 0 0 0 4 19.500h15M9 20v4M15 20v4M6 24.500h12" fill="none" stroke="#fff" strokeWidth="1.600" />
          <path d="M18.500 2.500h6v6.500c0 1-1 2-2 2h-2c-1 0-2-1-2-2zM18.500 6h6M21.500 11v14" fill="none" stroke="#fff" strokeWidth="1.500" />
        </svg>
        <svg viewBox="0 0 26 24" className="ml-[10px] h-[24px] w-[26px]">
          <path d="M1.500 8.500h4l6-5.500v18l-6-5.500h-4z" fill="none" stroke="#fff" strokeWidth="1.600" strokeLinejoin="round" />
          <path d="M14.500 8.500c1.600 2 1.600 5 0 7M17.800 5.500c3 3.700 3 9.300 0 13M21 2.500c4.400 5.500 4.400 13.500 0 19" fill="none" stroke="#fff" strokeWidth="1.600" />
        </svg>
        <div className="ml-[24px] flex flex-col items-end text-[16.500px] leading-6">
          <Fit width={65}>3:34 PM</Fit>
          <Fit width={83}>5/12/2024</Fit>
        </div>
        <svg viewBox="0 0 20 24" className="ml-[13px] h-[24px] w-[20px]">
          <path d="M10 1.500c-4 0-6.500 3-6.500 7V14L1.200 18.500h17.600L16.500 14V8.500c0-4-2.500-7-6.500-7zM7 19c.5 3 5.500 3 6 0" fill="none" stroke="#fff" strokeWidth="1.700" strokeLinejoin="round" />
        </svg>
        <div className="mt-[2px] ml-[26px]"><Copilot /></div>
      </div>
    </div>
  );
}

export default function App() {
  return (
    <div className="flex h-[1600px] w-[2560px] flex-col overflow-hidden bg-[#1f1f1f] font-['Open_Sans','Noto_Sans',sans-serif]">
      <TabStrip />
      <Toolbar />
      <Bookmarks />
      <div className="flex">
        <WebPage />
        <VerticalScroll />
      </div>
      <HorizontalScroll />
      <Taskbar />
    </div>
  );
}
